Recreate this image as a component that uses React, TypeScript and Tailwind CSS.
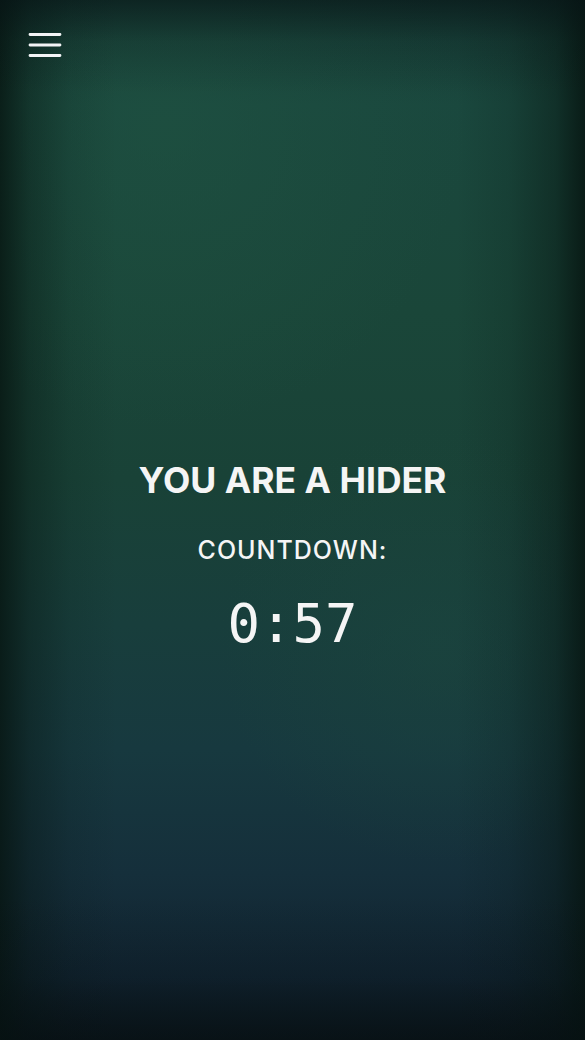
import React, { useState } from 'react';

const MenuIcon = () => (
  <svg width="34" height="26" viewBox="0 0 34 26" fill="none" aria-hidden="true">
    <path d="M2 2.5H32M2 13H32M2 23.5H32" stroke="#f3f4f6" strokeWidth="2.8" strokeLinecap="round" />
  </svg>
);

const App: React.FC = () => {
  const [seconds] = useState(57);

  // Format seconds as M:SS
  const formatTime = (s: number) => `${Math.floor(s / 60)}:${String(s % 60).padStart(2, '0')}`;

  return (
    <div className="relative h-[1040px] w-full overflow-hidden bg-[linear-gradient(to_bottom,#163a34_0%,#1a483e_10%,#1a4639_30%,#194237_46%,#183e3c_60%,#17393f_72%,#152f3b_84%,#112431_94%,#0b161b_100%)]">
      {/* soft glows */}
      <div className="pointer-events-none absolute inset-0 bg-[radial-gradient(circle_at_28%_12%,rgba(32,84,66,0.5)_0%,transparent_30%),radial-gradient(circle_at_75%_62%,rgba(28,72,62,0.45)_0%,transparent_28%)]" />
      {/* edge darkening */}
      <div className="pointer-events-none absolute inset-0 bg-[linear-gradient(to_right,rgba(6,20,16,0.8)_0%,rgba(6,20,16,0.4)_5%,rgba(6,20,16,0.12)_12%,transparent_20%,transparent_78%,rgba(6,20,16,0.15)_87%,rgba(6,20,16,0.45)_95%,rgba(6,20,16,0.85)_100%)]" />
      <div className="pointer-events-none absolute inset-0 bg-[linear-gradient(to_bottom,rgba(6,18,20,0.6)_0%,rgba(6,18,20,0.15)_4%,transparent_9%,transparent_86%,rgba(6,14,18,0.2)_94%,rgba(6,14,18,0.5)_100%)]" />

      <div className="relative flex h-full flex-col">
        <div className="px-[28px] pt-[32px]">
          <button className="block" aria-label="Open menu">
            <MenuIcon />
          </button>
        </div>

        <div className="flex flex-1 flex-col items-center pt-[402px] text-[#f5f5f5]">
          <h1 className="font-['Inter','Liberation_Sans',sans-serif] text-[35.5px] font-bold leading-[42px]">
            YOU ARE A HIDER
          </h1>
          <p className="mt-[33px] font-['Inter','Liberation_Sans',sans-serif] text-[25px] font-medium leading-[30px] tracking-[1px]">
            COUNTDOWN:
          </p>
          <p className="mt-[28px] font-['DejaVu_Sans_Mono','Liberation_Mono',monospace] text-[54px] font-normal leading-[62px]">
            {formatTime(seconds)}
          </p>
        </div>
      </div>
    </div>
  );
};

export default App;
